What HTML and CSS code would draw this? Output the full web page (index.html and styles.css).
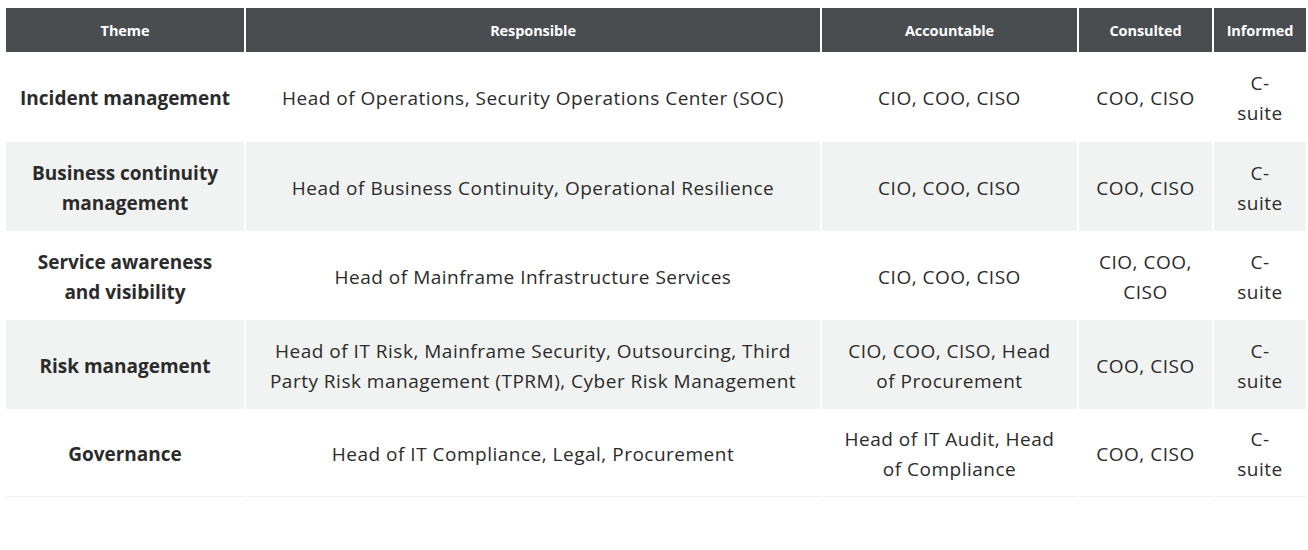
FILE: index.html
```html
<!DOCTYPE html>
<html lang="en">
<head>
<meta charset="utf-8">
<title>RACI</title>
<link rel="stylesheet" href="styles.css">
</head>
<body>
<table class="raci">
  <colgroup>
    <col class="c-theme">
    <col class="c-resp">
    <col class="c-acc">
    <col class="c-cons">
    <col class="c-inf">
  </colgroup>
  <thead>
    <tr>
      <th>Theme</th>
      <th>Responsible</th>
      <th>Accountable</th>
      <th>Consulted</th>
      <th>Informed</th>
    </tr>
  </thead>
  <tbody>
    <tr class="first">
      <td class="theme">Incident management</td>
      <td class="resp">Head of Operations, Security Operations Center (SOC)</td>
      <td class="acc">CIO, COO, CISO</td>
      <td class="cons">COO, CISO</td>
      <td class="inf">C-suite</td>
    </tr>
    <tr class="alt">
      <td class="theme">Business continuity management</td>
      <td class="resp">Head of Business Continuity, Operational Resilience</td>
      <td class="acc">CIO, COO, CISO</td>
      <td class="cons">COO, CISO</td>
      <td class="inf">C-suite</td>
    </tr>
    <tr>
      <td class="theme">Service awareness and visibility</td>
      <td class="resp">Head of Mainframe Infrastructure Services</td>
      <td class="acc">CIO, COO, CISO</td>
      <td class="cons">CIO, COO, CISO</td>
      <td class="inf">C-suite</td>
    </tr>
    <tr class="alt">
      <td class="theme">Risk management</td>
      <td class="resp">Head of IT Risk, Mainframe Security, Outsourcing, Third Party Risk management (TPRM), Cyber Risk Management</td>
      <td class="acc">CIO, COO, CISO, Head of Procurement</td>
      <td class="cons">COO, CISO</td>
      <td class="inf">C-suite</td>
    </tr>
    <tr class="last">
      <td class="theme">Governance</td>
      <td class="resp">Head of IT Compliance, Legal, Procurement</td>
      <td class="acc">Head of IT Audit, Head of Compliance</td>
      <td class="cons">COO, CISO</td>
      <td class="inf">C-suite</td>
    </tr>
  </tbody>
</table>
</body>
</html>
```

FILE: styles.css
```css
html, body {
  margin: 0;
  padding: 0;
  background: #ffffff;
}

body {
  padding: 8px 6px 0 4px;
  font-family: "Open Sans", "Noto Sans", sans-serif;
  color: #2b2b2b;
}

.raci {
  border-collapse: separate;
  border-spacing: 2px 0;
  table-layout: fixed;
  width: 1304px;
}

.c-theme { width: 238px; }
.c-resp { width: 574px; }
.c-acc { width: 255px; }
.c-cons { width: 133px; }
.c-inf { width: 92px; }

.raci th {
  background: #4a4d50;
  color: #ffffff;
  font-size: 14.5px;
  font-weight: 700;
  height: 44px;
  padding: 0 4px;
  text-align: center;
  vertical-align: middle;
  letter-spacing: -0.1px;
}

.raci td {
  box-sizing: border-box;
  height: 89px;
  padding: 2px 13px 0;
  font-size: 19px;
  line-height: 30px;
  letter-spacing: 0.5px;
  text-align: center;
  vertical-align: middle;
}

.raci tr.first td {
  height: 90px;
}

.raci td.theme {
  font-weight: 700;
  letter-spacing: 0;
  padding-left: 14px;
  padding-right: 14px;
}

.raci td.resp {
  padding-left: 20px;
  padding-right: 20px;
}

.raci td.acc {
  padding-left: 18px;
  padding-right: 18px;
}

.raci td.cons {
  padding-left: 12px;
  padding-right: 12px;
}

.raci td.inf {
  padding-left: 16px;
  padding-right: 16px;
}

.raci tr.alt td {
  background: #f1f3f2;
}

.raci tr.last td {
  height: 88px;
  border-bottom: 1px solid #eef0ef;
}
```
